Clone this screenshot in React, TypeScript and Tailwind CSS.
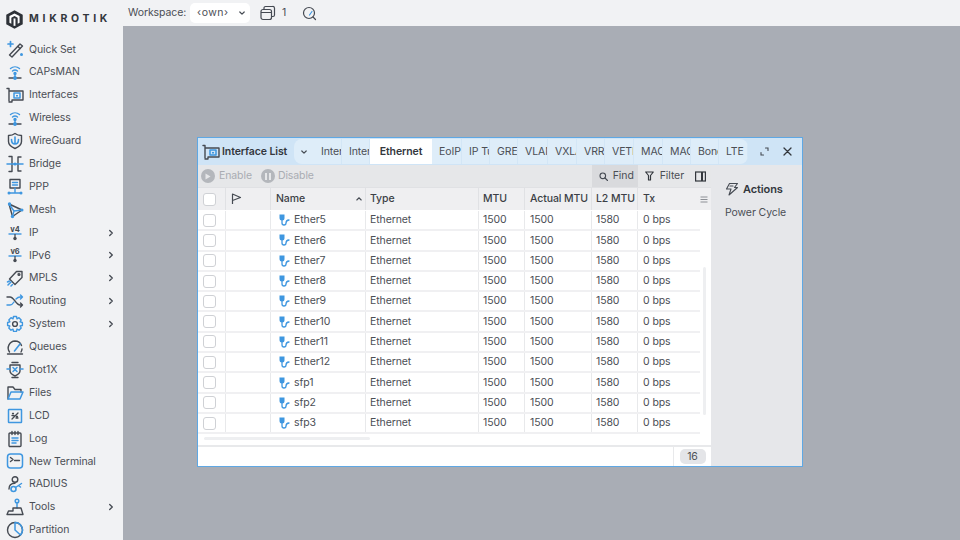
import React from "react";

const B = "#3f97e0";
const D = "#454a52";

type IP = { children: React.ReactNode; size?: number };
const Svg = ({ children, size = 18 }: IP) => (
  <svg width={size} height={size} viewBox="0 0 18 18" fill="none" strokeWidth="1.4" strokeLinecap="round" strokeLinejoin="round">
    {children}
  </svg>
);

const wifi = (
  <Svg>
    <path d="M4.5 5.5a7 7 0 0 1 9 0M6.5 8a4 4 0 0 1 5 0" stroke={B} />
    <path d="M9 10v5" stroke={B} />
    <circle cx="9" cy="10.500" r="1" fill={B} stroke={B} />
    <path d="M3 15h12" stroke={D} />
    <circle cx="9" cy="15" r="1.200" fill={B} stroke={B} />
  </Svg>
);

const ipIcon = (n: string) => (
  <svg width="18" height="18" viewBox="0 0 18 18" fill="none">
    <text x="9" y="7.500" textAnchor="middle" fontSize="7.500" fontWeight="700" fontFamily="Inter, sans-serif" fill={D}>{n}</text>
    <path d="M2.500 10h13" stroke={B} strokeWidth="1.400" />
    <path d="M9 10v4" stroke={D} strokeWidth="1.300" />
    <circle cx="9" cy="14.500" r="1.700" fill={D} />
  </svg>
);

const icons: Record<string, React.ReactNode> = {
  "Quick Set": (
    <Svg>
      <path d="M3.500 15 14 4l2.500 2L6 17z" stroke={D} />
      <path d="M12 6.500l2 2" stroke={D} />
      <path d="M4.500 1.500v5M2 4h5" stroke={B} strokeWidth="1.700" />
      <circle cx="15.500" cy="14.500" r="1.500" fill={B} />
    </Svg>
  ),
  CAPsMAN: wifi,
  Interfaces: (
    <Svg>
      <path d="M1 2.500h2v12.500M3 5h14v9H6v2H3" stroke={D} />
      <rect x="8" y="7" width="6" height="5" stroke={B} strokeWidth="1.500" />
      <rect x="10" y="9" width="2" height="1.500" fill={B} />
    </Svg>
  ),
  Wireless: wifi,
  WireGuard: (
    <Svg>
      <path d="M9 1.500c2 1.600 4 2 6.500 2v6c0 3.500-3 5.500-6.500 7-3.500-1.500-6.500-3.500-6.500-7v-6c2.500 0 4.500-.4 6.500-2z" stroke={D} />
      <path d="M5.500 7.500c0 6 7 6 7 0M9 5v7" stroke={B} strokeWidth="1.600" />
    </Svg>
  ),
  Bridge: (
    <Svg>
      <path d="M6 1.500v15M3 1.500h3M3 16.500h3M12 2h3M12 2v14h3" stroke={D} />
      <path d="M1 9h16" stroke={B} strokeWidth="1.500" />
      <circle cx="9" cy="9" r="1.600" fill={B} />
    </Svg>
  ),
  PPP: (
    <Svg>
      <rect x="4" y="1.500" width="10" height="8.500" stroke={D} />
      <path d="M6.500 4.500h5M6.500 7h5" stroke={B} />
      <path d="M9 10v4M3 15h12" stroke={B} />
      <circle cx="3" cy="15" r="1.500" fill={B} />
      <circle cx="15" cy="15" r="1.500" fill={B} />
    </Svg>
  ),
  Mesh: (
    <Svg>
      <path d="M3 3l13 6-9.500 6.500z" stroke={D} />
      <path d="M3 3l5 7-1.500 5.500M8 10l8-1" stroke={B} />
      <circle cx="3.500" cy="3" r="1.700" fill={B} />
      <circle cx="6.500" cy="15.500" r="1.700" fill={B} />
      <circle cx="16" cy="9" r="1.500" fill={B} />
    </Svg>
  ),
  IP: ipIcon("v4"),
  IPv6: ipIcon("v6"),
  MPLS: (
    <Svg>
      <path d="M16 2.500v6L9 15.500 3.500 10l7-7.500z" stroke={D} />
      <circle cx="13" cy="5.500" r=".9" stroke={D} />
      <path d="M1.500 13l2-1M2 16l3-3M5 17l1.500-1.500" stroke={B} strokeWidth="1.500" />
    </Svg>
  ),
  Routing: (
    <Svg>
      <path d="M1 5h3c4 0 6 8 10 8h2.500M14.500 11l2 2-2 2" stroke={D} />
      <path d="M1 13h3c1.700 0 3-1.400 4-3M10 7c1.200-1.200 2.500-2 4-2h2.500M14.500 3l2 2-2 2" stroke={B} />
    </Svg>
  ),
  System: (
    <Svg>
      <path d="M7.500 1.500h3l.5 2.300 2-1.100 2.200 2.200-1.100 2 2.300.6v3l-2.300.5 1.100 2-2.200 2.200-2-1.100-.5 2.300h-3l-.5-2.300-2 1.100-2.200-2.200 1.100-2-2.300-.5v-3l2.300-.6-1.100-2L5 2.700l2 1.100z" stroke={B} />
      <circle cx="9" cy="9" r="2.400" stroke={D} />
    </Svg>
  ),
  Queues: (
    <Svg>
      <path d="M3.500 14A7 7 0 0 1 9 3a7 7 0 0 1 6.500 4.500M16 11a7 7 0 0 1-1 3" stroke={D} />
      <path d="M8.500 13 14 6" stroke={B} strokeWidth="1.600" />
      <path d="M1.500 16h15" stroke={D} />
    </Svg>
  ),
  Dot1X: (
    <Svg>
      <path d="M6 1.500h6M6 16.500h6" stroke={D} />
      <path d="M4 4h10v6c0 2.500-2.500 3.800-5 5-2.500-1.200-5-2.500-5-5z" stroke={D} />
      <path d="M7 6.500l4 4M11 6.500l-4 4M1 8h3M14 8h3" stroke={B} strokeWidth="1.500" />
    </Svg>
  ),
  Files: (
    <Svg>
      <path d="M2 15V3h5l2 2.500h6V8" stroke={D} />
      <path d="M2 15 5 8h12l-3 7z" stroke={B} strokeWidth="1.500" />
    </Svg>
  ),
  LCD: (
    <Svg>
      <rect x="2.500" y="2.500" width="13" height="13" rx=".5" stroke={B} strokeWidth="1.500" />
      <path d="M6 12l6-6M6 8.500h2M10 11h2M6.500 6.500h1M10.500 9.500h1" stroke={D} strokeWidth="1.300" />
    </Svg>
  ),
  Log: (
    <Svg>
      <rect x="3" y="3" width="12" height="13.500" rx="1" stroke={D} />
      <path d="M6 1.500v3M9 1.500v3M12 1.500v3" stroke={D} />
      <path d="M6 8h6M6 10.500h6M6 13h4" stroke={B} strokeWidth="1.500" />
    </Svg>
  ),
  "New Terminal": (
    <Svg>
      <rect x="1.500" y="2" width="15" height="14" rx="3" stroke={B} strokeWidth="1.500" />
      <path d="M4.500 5.500l2.500 2-2.500 2" stroke={D} />
      <path d="M8.500 8.500h5" stroke={D} />
    </Svg>
  ),
  RADIUS: (
    <Svg>
      <circle cx="9" cy="4.500" r="2.800" stroke={D} />
      <path d="M3 14c0-4 2.500-5.800 6-5.800" stroke={D} />
      <circle cx="7.500" cy="14" r="2.500" stroke={B} strokeWidth="1.600" />
      <path d="M9.500 12.500l6-4M13 11l1.500 1" stroke={B} strokeWidth="1.500" />
    </Svg>
  ),
  Tools: (
    <Svg>
      <circle cx="11" cy="3" r="1.800" stroke={B} strokeWidth="1.500" />
      <path d="M11 5v5" stroke={B} strokeWidth="1.500" />
      <path d="M7 10h8l2 6.500H1l1.500-3.500H7z" stroke={D} />
    </Svg>
  ),
  Partition: (
    <Svg>
      <circle cx="9" cy="9" r="7.500" stroke={D} />
      <path d="M9 1.500V9l5.500 5A7.500 7.500 0 0 0 9 1.500z" stroke={B} strokeWidth="1.500" />
    </Svg>
  ),
};

const menu: [string, boolean][] = [
  ["Quick Set", false], ["CAPsMAN", false], ["Interfaces", false], ["Wireless", false], ["WireGuard", false],
  ["Bridge", false], ["PPP", false], ["Mesh", false], ["IP", true], ["IPv6", true], ["MPLS", true], ["Routing", true],
  ["System", true], ["Queues", false], ["Dot1X", false], ["Files", false], ["LCD", false], ["Log", false],
  ["New Terminal", false], ["RADIUS", false], ["Tools", true], ["Partition", false],
];

const Chevron = () => (
  <svg width="8" height="8" viewBox="0 0 8 8" fill="none" stroke="#454a52" strokeWidth="1.300" strokeLinecap="round" strokeLinejoin="round">
    <path d="M2.700 1.500 5.300 4 2.700 6.500" />
  </svg>
);

const ChevronDown = () => (
  <svg width="8" height="8" viewBox="0 0 8 8" fill="none" stroke="#454a52" strokeWidth="1.200" strokeLinecap="round" strokeLinejoin="round">
    <path d="M1.800 3 4 5.200 6.200 3" />
  </svg>
);

const Logo = () => (
  <svg width="19" height="19" viewBox="0 0 18 18">
    <path d="M9 .3 16.800 4.600v8.800L9 17.700 1.200 13.400V4.600z" fill="#2e3238" />
    <path d="M9 3.200 13.800 5.800v6.200l-1.800 1V7.300L9 5.600 6 7.300V13l-1.800-1V5.800z" fill="#fff" />
    <path d="M8.100 8h1.800v7H8.100z" fill="#fff" />
  </svg>
);

const tabs: [string, string, boolean?][] = [
  ["Interface", "w-[28px]"], ["Interface", "w-[28px]"], ["Ethernet", "w-[62px]", true], ["EoIP Tunnel", "w-[30px]"],
  ["IP Tunnel", "w-[28px]"], ["GRE", "w-[28px]"], ["VLAN", "w-[30px]"], ["VXLAN", "w-[29px]"], ["VRRP", "w-[28px]"],
  ["VETH", "w-[29px]"], ["MAC", "w-[29px]"], ["MAC", "w-[28px]"], ["Bonding", "w-[28px]"], ["LTE", "w-[29px]"],
];

const rows = ["Ether5", "Ether6", "Ether7", "Ether8", "Ether9", "Ether10", "Ether11", "Ether12", "sfp1", "sfp2", "sfp3"];

const PortIcon = () => (
  <svg width="11" height="12" viewBox="0 0 11 12" fill="none" strokeLinecap="round">
    <path d="M.500.500h5v3.500a2.500 2.500 0 0 1-5 0z" fill={B} />
    <path d="M3 6v3a2 2 0 0 0 4 0c0-1.800 1-2.800 3-3" stroke={B} strokeWidth="1.300" />
  </svg>
);

const Check = () => <div className="w-[13px] h-[13px] rounded-[3px] border border-[#cfd1d5] bg-white" />;

export default function App() {
  return (
    <div className="relative w-[960px] h-[540px] overflow-hidden flex bg-[#a9adb5] text-[#4b4e55] text-[10.500px] tracking-[-0.1px] [font-family:Inter,'Liberation_Sans',sans-serif]">
      <aside className="w-[123px] h-full shrink-0 bg-[#f1f2f4] overflow-hidden">
        <div className="h-[38px] flex items-center pl-[5px] gap-[5px] pt-px">
          <Logo />
          <span className="text-[10.500px] font-bold tracking-[3.700px] leading-none text-[#33373d] uppercase">Mikrotik</span>
        </div>
        <nav>
          {menu.map(([n, sub]) => (
            <div key={n} className="h-[22.900px] flex items-center pl-[6px] pr-[8px] gap-[5px]">
              <span className="w-[18px] h-[18px] shrink-0 flex">{icons[n]}</span>
              <span className="flex-1 whitespace-nowrap">{n}</span>
              {sub && <Chevron />}
            </div>
          ))}
        </nav>
      </aside>

      <main className="flex-1 relative">
        <div className="h-[26px] bg-[#f1f2f4] flex items-center pl-[5px]">
          <span className="mr-[4px]">Workspace:</span>
          <div className="w-[60px] h-[20px] bg-white rounded-[5px] flex items-center pl-[7px] pr-[4px] justify-between">
            <span className="tracking-[0.5px]">‹own›</span>
            <ChevronDown />
          </div>
          <svg className="ml-[10px]" width="16" height="16" viewBox="0 0 16 16" fill="none" stroke="#454a52" strokeWidth="1.200">
            <rect x="1" y="4.500" width="10.500" height="10" rx="2" />
            <path d="M4 4V3a1.500 1.500 0 0 1 1.500-1.500h7A1.800 1.800 0 0 1 14.500 3v7a1.500 1.500 0 0 1-1.500 1.500h-1.500M1 7.500h10.500" />
          </svg>
          <span className="ml-[6px]">1</span>
          <svg className="ml-[16px]" width="15" height="15" viewBox="0 0 15 15" fill="none" stroke="#454a52" strokeWidth="1.200" strokeLinecap="round">
            <circle cx="7" cy="7" r="5.500" />
            <path d="m11 11 2.500 2.500" />
            <path d="M7.500 9 10 5.500" stroke={B} />
          </svg>
        </div>

        <section className="absolute left-[74px] top-[137px] w-[606px] h-[330px] border border-[#5fa8e4] bg-white flex flex-col">
          <header className="h-[27px] shrink-0 bg-[#cfe4f6] flex items-center pl-[4px]">
            <span className="w-[18px] h-[18px] flex">{icons.Interfaces}</span>
            <span className="ml-[2px] w-[72px] font-semibold text-[#33373d] whitespace-nowrap">Interface List</span>
            <div className="h-[25px] w-[454px] bg-[#deedf9] rounded-[8px] flex items-center overflow-hidden">
              <span className="w-[20px] flex justify-center shrink-0"><ChevronDown /></span>
              {tabs.map(([t, w, active], i) => (
                <div
                  key={i}
                  className={
                    active
                      ? `${w} h-full shrink-0 bg-white flex items-center justify-center font-semibold text-[#33373d]`
                      : `${w} h-full shrink-0 border-r border-[#d3e6f6] pl-[7px] flex items-center overflow-hidden whitespace-nowrap`
                  }
                >
                  {t}
                </div>
              ))}
            </div>
            <svg className="ml-[12px]" width="9" height="9" viewBox="0 0 9 9" fill="none" stroke="#454a52" strokeWidth="1.100" strokeLinecap="round">
              <path d="M5.500 1h2.500v2.500M3.500 8H1V5.500" />
            </svg>
            <svg className="ml-[14px]" width="9" height="9" viewBox="0 0 9 9" fill="none" stroke="#33373d" strokeWidth="1.300" strokeLinecap="round">
              <path d="m1 1 7 7M8 1 1 8" />
            </svg>
          </header>

          <div className="flex-1 flex min-h-0">
            <div className="w-[513px] shrink-0 flex flex-col min-w-0">
              <div className="h-[22px] shrink-0 bg-[#e6e7e9] flex items-center pl-[3px] pr-[4px] text-[#a9acb2]">
                <span className="w-[14px] h-[14px] rounded-full bg-[#b4b7bc] flex items-center justify-center">
                  <svg width="6" height="7" viewBox="0 0 6 7"><path d="M.500.500 5.500 3.500.500 6.500z" fill="#e6e7e9" /></svg>
                </span>
                <span className="ml-[4px]">Enable</span>
                <span className="ml-[9px] w-[14px] h-[14px] rounded-full bg-[#b4b7bc] flex items-center justify-center gap-[2px]">
                  <span className="w-[2px] h-[7px] bg-[#e6e7e9]" />
                  <span className="w-[2px] h-[7px] bg-[#e6e7e9]" />
                </span>
                <span className="ml-[3px]">Disable</span>
                <div className="ml-auto w-[46px] h-[22px] bg-[#d9dadd] flex items-center pl-[7px] gap-[5px] text-[#4b4e55] mr-[-1px]">
                  <svg width="9" height="9" viewBox="0 0 9 9" fill="none" stroke="#454a52" strokeWidth="1.100" strokeLinecap="round">
                    <circle cx="3.800" cy="3.800" r="2.800" /><path d="m6 6 2.500 2.500" />
                  </svg>
                  Find
                </div>
                <div className="ml-[8px] flex items-center gap-[6px] text-[#4b4e55]">
                  <svg width="9" height="10" viewBox="0 0 9 10" fill="none" stroke="#33373d" strokeWidth="1.200" strokeLinejoin="round">
                    <path d="M.700 1h7.600L5.500 4.500V9h-2V4.500z" />
                  </svg>
                  Filter
                </div>
                <svg className="ml-[11px] mr-[1px]" width="11" height="11" viewBox="0 0 11 11" fill="none" stroke="#33373d" strokeWidth="1.200">
                  <rect x=".600" y="1" width="9.800" height="9" /><path d="M7 1v9" strokeWidth="2" />
                </svg>
              </div>

              <div className="h-[23px] shrink-0 bg-[#efeff1] flex font-medium text-[#3c3f46] border-t border-[#e0e1e4]">
                <div className="w-[27px] shrink-0 flex items-center pl-[5px]"><Check /></div>
                <div className="w-[45px] shrink-0 border-l border-[#e0e1e4] flex items-center pl-[5px]">
                  <svg width="11" height="12" viewBox="0 0 11 12" fill="none" stroke="#454a52" strokeWidth="1.200" strokeLinejoin="round">
                    <path d="M1.500 11V1l8 3.500-8 3" />
                  </svg>
                </div>
                <div className="w-[95px] shrink-0 border-l border-[#e0e1e4] flex items-center pl-[5px] pr-[2px] justify-between">
                  Name
                  <svg width="8" height="8" viewBox="0 0 8 8" fill="none" stroke="#454a52" strokeWidth="1.100" strokeLinecap="round"><path d="M1.800 5 4 2.800 6.200 5" /></svg>
                </div>
                <div className="w-[113px] shrink-0 border-l border-[#e0e1e4] flex items-center pl-[4px]">Type</div>
                <div className="w-[46px] shrink-0 border-l border-[#e0e1e4] flex items-center pl-[4px]">MTU</div>
                <div className="w-[67px] shrink-0 border-l border-[#e0e1e4] flex items-center pl-[5px] whitespace-nowrap">Actual MTU</div>
                <div className="w-[46px] shrink-0 border-l border-[#e0e1e4] flex items-center pl-[4px] whitespace-nowrap">L2 MTU</div>
                <div className="flex-1 border-l border-[#e0e1e4] flex items-center pl-[5px] pr-[3px] justify-between">
                  Tx
                  <svg width="8" height="7" viewBox="0 0 8 7" stroke="#8d9096" strokeWidth="1"><path d="M.500 1h7M.500 3.500h7M.500 6h7" /></svg>
                </div>
              </div>

              <div className="relative flex-1 min-h-0 overflow-hidden pt-px">
                {rows.map((r) => (
                  <div key={r} className="h-[20.300px] w-[502px] flex border-b-2 border-[#f0f0f2]">
                    <div className="w-[27px] shrink-0 flex items-center pl-[5px]"><Check /></div>
                    <div className="w-[45px] shrink-0 border-l border-[#e8e9eb]" />
                    <div className="w-[95px] shrink-0 border-l border-[#e8e9eb] flex items-center pl-[8px] gap-[4px]"><PortIcon />{r}</div>
                    <div className="w-[113px] shrink-0 border-l border-[#e8e9eb] flex items-center pl-[4px]">Ethernet</div>
                    <div className="w-[46px] shrink-0 border-l border-[#e8e9eb] flex items-center pl-[4px]">1500</div>
                    <div className="w-[67px] shrink-0 border-l border-[#e8e9eb] flex items-center pl-[5px]">1500</div>
                    <div className="w-[46px] shrink-0 border-l border-[#e8e9eb] flex items-center pl-[4px]">1580</div>
                    <div className="flex-1 border-l border-[#e8e9eb] flex items-center pl-[5px]">0 bps</div>
                  </div>
                ))}
                <div className="absolute left-[6px] top-[227px] w-[166px] h-[3px] rounded-full bg-[#eeeff1]" />
                <div className="absolute right-[5px] top-[57px] w-[3px] h-[148px] rounded-full bg-[#eeeff1]" />
              </div>

              <div className="h-[21px] shrink-0 border-t-2 border-[#e8e9eb] flex justify-end">
                <div className="w-[38px] border-l border-[#e8e9eb] flex items-center justify-center">
                  <span className="w-[26px] h-[15px] rounded-[5px] bg-[#e4e5e8] flex items-center justify-center">16</span>
                </div>
              </div>
            </div>

            <div className="flex-1 bg-[#e6e7ea] pl-[14px] pt-[15px]">
              <div className="flex items-center gap-[4px] h-[18px]">
                <svg width="14" height="14" viewBox="0 0 14 14" fill="none" stroke="#454a52" strokeWidth="1.100" strokeLinejoin="round" strokeLinecap="round">
                  <path d="M4.500 1.500h8L9.500 5.500h3L4 13l2-6H1.500z" />
                  <path d="M5 4h3" />
                </svg>
                <span className="font-semibold text-[#33373d] text-[11px]">Actions</span>
              </div>
              <div className="mt-[7px] whitespace-nowrap">Power Cycle</div>
            </div>
          </div>
        </section>
      </main>
    </div>
  );
}
